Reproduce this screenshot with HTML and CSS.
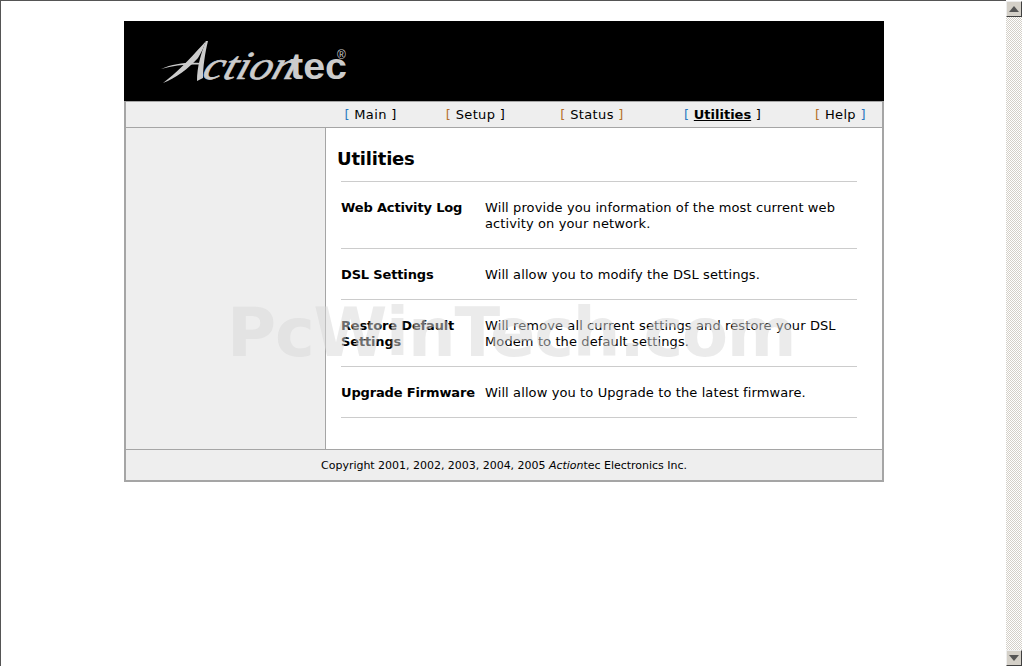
FILE: index.html
```html
<!DOCTYPE html>
<html lang="en">
<head>
<meta charset="utf-8">
<title>Actiontec Utilities</title>
<link rel="stylesheet" href="styles.css">
</head>
<body>
<div class="page">
  <main class="viewport">
    <div class="frame">
      <header class="header">
        <svg class="logo" width="200" height="50" viewBox="0 0 200 50" aria-label="Actiontec">
          <path class="logo-mark" d="M47 2 C36 14 22 30 9 40 L4 44 C17 39 29 30 39 19 C42 14 45 8 47 2 Z"/>
          <path class="logo-mark" d="M47 2 L49 2 C46 14 44 28 44 39 L38 42 C38 28 42 14 47 2 Z"/>
          <path class="logo-mark" d="M2 30 C15 24 30 23 42 24 L42 25.5 C28 25 15 26 2 30 Z"/>
          <text class="logo-script" transform="translate(42 40) skewX(-18)" textLength="92" lengthAdjust="spacingAndGlyphs">ction</text>
          <text class="logo-bold" x="131" y="40" textLength="57" lengthAdjust="spacingAndGlyphs">tec</text>
          <text class="logo-reg" x="178" y="20">®</text>
        </svg>
      </header>
      <div class="shell">
        <nav class="nav">
          <span class="nav-item"><i class="br-blue">[</i> <a>Main</a> ]</span>
          <span class="nav-item"><i class="br-orange">[</i> <a>Setup</a> ]</span>
          <span class="nav-item"><i class="br-orange">[</i> <a>Status</a> <i class="br-orange">]</i></span>
          <span class="nav-item"><i class="br-blue">[</i> <a class="current">Utilities</a> ]</span>
          <span class="nav-item nav-last"><i class="br-orange">[</i> <a>Help</a> <i class="br-blue">]</i></span>
        </nav>
        <div class="body">
          <aside class="sidebar"></aside>
          <section class="content">
            <h1 class="title">Utilities</h1>
            <div class="rows">
              <div class="row">
                <strong>Web Activity Log</strong>
                <span>Will provide you information of the most current web<br>activity on your network.</span>
              </div>
              <div class="row">
                <strong>DSL Settings</strong>
                <span>Will allow you to modify the DSL settings.</span>
              </div>
              <div class="row">
                <strong>Restore Default<br>Settings</strong>
                <span>Will remove all current settings and restore your DSL<br>Modem to the default settings.</span>
              </div>
              <div class="row">
                <strong>Upgrade Firmware</strong>
                <span>Will allow you to Upgrade to the latest firmware.</span>
              </div>
            </div>
          </section>
        </div>
        <footer class="footer">Copyright 2001, 2002, 2003, 2004, 2005 <em>Action</em>tec Electronics Inc.</footer>
      </div>
      <div class="watermark">PcWinTech.com</div>
    </div>
  </main>
  <div class="scrollbar">
    <div class="sb-btn"><svg width="10" height="6" viewBox="0 0 10 6"><path d="M5 0 L10 6 H0 Z"/></svg></div>
    <div class="sb-track"></div>
    <div class="sb-btn"><svg width="10" height="6" viewBox="0 0 10 6"><path d="M0 0 H10 L5 6 Z"/></svg></div>
  </div>
</div>
</body>
</html>
```
FILE: styles.css
```css
html, body {
  margin: 0;
  height: 666px;
  overflow: hidden;
  background: #fff;
}
.page {
  display: flex;
  height: 666px;
  font-family: "DejaVu Sans", Verdana, sans-serif;
  font-size: 13px;
  line-height: 16px;
  color: #000;
}
.viewport {
  flex: 1;
  border-top: 1px solid #555;
  border-left: 1px solid #555;
  min-width: 0;
}
.frame {
  position: relative;
  width: 760px;
  margin: 20px 0 0 123px;
}
.header {
  height: 80px;
  background: #000;
  box-sizing: border-box;
  padding: 18px 0 0 35px;
}
.logo { display: block; overflow: visible; }
.logo-mark { fill: #ccc; }
.logo-script {
  font-family: "Liberation Serif", serif;
  font-style: italic;
  font-size: 40px;
  fill: #ccc;
  stroke: #ccc;
  stroke-width: 0.6;
}
.logo-bold {
  font-family: "Liberation Sans", sans-serif;
  font-weight: 700;
  font-size: 36px;
  fill: #ccc;
}
.logo-reg {
  font-family: "Liberation Sans", sans-serif;
  font-size: 12px;
  fill: #ccc;
}
.shell {
  border: 2px solid #a5a5a5;
  border-top-width: 1px;
}
.nav {
  display: grid;
  grid-template-columns: 101px 109px 124px 137px 1fr;
  height: 25px;
  padding-left: 194px;
  align-items: center;
  justify-items: center;
  background: #eee;
  border-bottom: 1px solid #a5a5a5;
  letter-spacing: 0.35px;
}
.nav-item { white-space: pre-wrap; }
.nav-last { justify-self: start; margin-left: 24px; }
.nav i { font-style: normal; }
.br-blue { color: #2a78c0; }
.br-orange { color: #b5702a; }
.current { font-weight: 700; text-decoration: underline; letter-spacing: 0; }
.body {
  display: flex;
  height: 321px;
}
.sidebar {
  width: 199px;
  background: #eee;
  border-right: 1px solid #a5a5a5;
}
.content {
  flex: 1;
  background: #fff;
  padding-right: 25px;
}
.title {
  margin: 0;
  height: 53px;
  box-sizing: border-box;
  padding: 20px 0 0 11px;
  font-size: 18px;
  line-height: 22px;
  font-weight: 700;
  letter-spacing: -0.2px;
}
.rows {
  margin-left: 15px;
  border-top: 1px solid #ccc;
}
.row {
  display: grid;
  grid-template-columns: 144px 1fr;
  padding: 18px 0 16px;
  border-bottom: 1px solid #ccc;
  letter-spacing: 0.11px;
}
.row strong { font-weight: 700; letter-spacing: -0.15px; }
.footer {
  height: 30px;
  line-height: 32px;
  background: #eee;
  border-top: 1px solid #a5a5a5;
  text-align: center;
  font-size: 11px;
  letter-spacing: -0.02px;
}
.watermark {
  position: absolute;
  left: 103px;
  top: 272px;
  font-size: 67px;
  line-height: 80px;
  letter-spacing: -1.2px;
  font-weight: 700;
  white-space: nowrap;
  color: rgba(215, 215, 215, 0.5);
  pointer-events: none;
}
.scrollbar {
  width: 16px;
  display: flex;
  flex-direction: column;
  padding-top: 1px;
  box-sizing: border-box;
}
.sb-track {
  flex: 1;
  background-color: #fff;
  background-image: conic-gradient(#d4d0c8 25%, #fff 0 50%, #d4d0c8 0 75%, #fff 0);
  background-size: 2px 2px;
}
.sb-btn {
  height: 16px;
  box-sizing: border-box;
  display: flex;
  align-items: center;
  justify-content: center;
  background: #d4d0c8;
  border: 1px solid;
  border-color: #eee #404040 #404040 #eee;
}
.sb-btn path { fill: #555; }
```
